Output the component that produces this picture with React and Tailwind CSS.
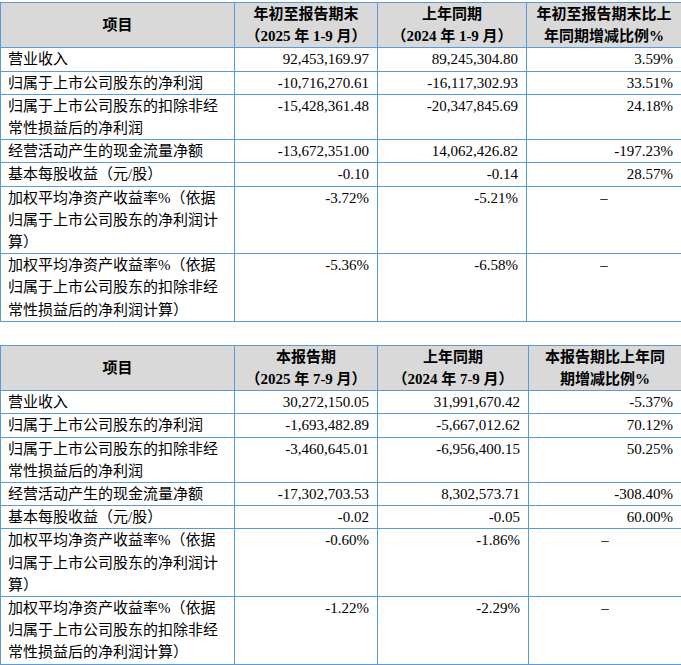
// Two quarterly-report summary tables, stacked.
const FONT = { fontFamily: '"Liberation Serif", "Noto Sans CJK SC", serif' };

const ytd = [
  { label: ['营业收入'], a: '92,453,169.97', b: '89,245,304.80', c: '3.59%' },
  { label: ['归属于上市公司股东的净利润'], a: '-10,716,270.61', b: '-16,117,302.93', c: '33.51%' },
  { label: ['归属于上市公司股东的扣除非经', '常性损益后的净利润'], a: '-15,428,361.48', b: '-20,347,845.69', c: '24.18%' },
  { label: ['经营活动产生的现金流量净额'], a: '-13,672,351.00', b: '14,062,426.82', c: '-197.23%' },
  { label: ['基本每股收益（元/股）'], a: '-0.10', b: '-0.14', c: '28.57%' },
  { label: ['加权平均净资产收益率%（依据', '归属于上市公司股东的净利润计', '算）'], a: '-3.72%', b: '-5.21%', c: null },
  { label: ['加权平均净资产收益率%（依据', '归属于上市公司股东的扣除非经', '常性损益后的净利润计算）'], a: '-5.36%', b: '-6.58%', c: null },
];

const quarter = [
  { label: ['营业收入'], a: '30,272,150.05', b: '31,991,670.42', c: '-5.37%' },
  { label: ['归属于上市公司股东的净利润'], a: '-1,693,482.89', b: '-5,667,012.62', c: '70.12%' },
  { label: ['归属于上市公司股东的扣除非经', '常性损益后的净利润'], a: '-3,460,645.01', b: '-6,956,400.15', c: '50.25%' },
  { label: ['经营活动产生的现金流量净额'], a: '-17,302,703.53', b: '8,302,573.71', c: '-308.40%' },
  { label: ['基本每股收益（元/股）'], a: '-0.02', b: '-0.05', c: '60.00%' },
  { label: ['加权平均净资产收益率%（依据', '归属于上市公司股东的净利润计', '算）'], a: '-0.60%', b: '-1.86%', c: null },
  { label: ['加权平均净资产收益率%（依据', '归属于上市公司股东的扣除非经', '常性损益后的净利润计算）'], a: '-1.22%', b: '-2.29%', c: null },
];

const base = 'border border-[#5b9bd5] p-0 whitespace-nowrap';
const cell = `${base} align-top`;

function Lines({ lines }) {
  return lines.map((l, i) => (
    <div key={i}>{l}</div>
  ));
}

function ReportTable({ head, rows, widths }) {
  return (
    <table className="table-fixed border-collapse w-[681px] text-[15px] leading-[22.2px] text-black">
      <colgroup>
        {widths.map((w, i) => (
          <col key={i} style={{ width: w }} />
        ))}
      </colgroup>
      <thead>
        <tr className="bg-[#d9d9d9] font-bold">
          <th className={`${base} align-middle text-center`}>项目</th>
          {head.map((h, i) => (
            <th key={i} className={`${cell} text-center`}>
              <Lines lines={h} />
            </th>
          ))}
        </tr>
      </thead>
      <tbody>
        {rows.map((r, i) => (
          <tr key={i}>
            <td className={`${cell} text-left pl-[7px]`}>
              <Lines lines={r.label} />
            </td>
            <td className={`${cell} text-right pr-[8px]`}>{r.a}</td>
            <td className={`${cell} text-right pr-[8px]`}>{r.b}</td>
            <td className={`${cell} ${r.c ? 'text-right pr-[8px]' : 'text-center'}`}>
              {r.c ?? '–'}
            </td>
          </tr>
        ))}
      </tbody>
    </table>
  );
}

export default function App() {
  return (
    <div className="w-[681px] h-[665px] overflow-hidden bg-white pt-[2px]" style={FONT}>
      <ReportTable
        widths={[234, 143, 149, 155]}
        head={[
          ['年初至报告期末', '（2025 年 1-9 月）'],
          ['上年同期', '（2024 年 1-9 月）'],
          ['年初至报告期末比上', '年同期增减比例%'],
        ]}
        rows={ytd}
      />
      <div className="h-[23px]" />
      <ReportTable
        widths={[234, 143, 151, 153]}
        head={[
          ['本报告期', '（2025 年 7-9 月）'],
          ['上年同期', '（2024 年 7-9 月）'],
          ['本报告期比上年同', '期增减比例%'],
        ]}
        rows={quarter}
      />
    </div>
  );
}
